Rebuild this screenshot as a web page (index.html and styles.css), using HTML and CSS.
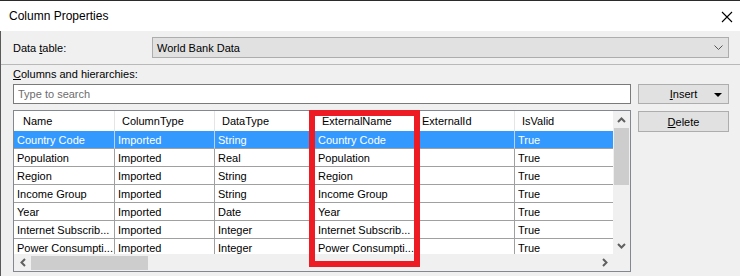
FILE: index.html
```html
<!doctype html>
<html lang="en">
<head>

<meta charset="utf-8">
<meta name="viewport" content="width=device-width, initial-scale=1">

<title>Column Properties</title>

<link rel="stylesheet" href="styles.css">

</head>
<body>

<div class="window">
	<div class="titlebar">
		<span class="title">Column Properties</span>
		<svg class="close" width="12" height="12" viewBox="0 0 12 12"><path d="M1 1 L11 11 M11 1 L1 11" stroke="#000" stroke-width="1.1" fill="none"/></svg>
	</div>

	<div class="content">
		<div class="field-row">
			<label for="data-table">Data <u>t</u>able:</label>
			<div class="combo" id="data-table">
				<span>World Bank Data</span>
				<svg width="9" height="5" viewBox="0 0 9 5"><polyline points="0.5,0.5 4.5,4.5 8.5,0.5" stroke="#555" stroke-width="1" fill="none"/></svg>
			</div>
		</div>

		<div class="sep"></div>

		<div class="section-label"><u>C</u>olumns and hierarchies:</div>

		<div class="columns-layout">
			<input type="text" class="search" placeholder="Type to search">
			<button type="button" class="btn btn--split"><span><u>I</u>nsert</span><span class="caret"></span></button>

			<div class="grid-box">
				<div class="grid-view">
					<table class="grid">
						<thead>
							<tr><th>Name</th><th>ColumnType</th><th>DataType</th><th>ExternalName</th><th>ExternalId</th><th>IsValid</th></tr>
						</thead>
						<tbody>
							<tr class="--selected"><td>Country Code</td><td>Imported</td><td>String</td><td>Country Code</td><td></td><td>True</td></tr>
							<tr><td>Population</td><td>Imported</td><td>Real</td><td>Population</td><td></td><td>True</td></tr>
							<tr><td>Region</td><td>Imported</td><td>String</td><td>Region</td><td></td><td>True</td></tr>
							<tr><td>Income Group</td><td>Imported</td><td>String</td><td>Income Group</td><td></td><td>True</td></tr>
							<tr><td>Year</td><td>Imported</td><td>Date</td><td>Year</td><td></td><td>True</td></tr>
							<tr><td>Internet Subscrib...</td><td>Imported</td><td>Integer</td><td>Internet Subscrib...</td><td></td><td>True</td></tr>
							<tr><td>Power Consumpti...</td><td>Imported</td><td>Integer</td><td>Power Consumpti...</td><td></td><td>True</td></tr>
						</tbody>
					</table>
				</div>

				<div class="vscroll">
					<div class="arrow"><svg width="9" height="6" viewBox="0 0 9 6"><polyline points="1,5 4.5,1.5 8,5" stroke="#606060" stroke-width="2" fill="none"/></svg></div>
					<div class="vscroll__thumb"></div>
					<div class="vscroll__track"></div>
					<div class="arrow"><svg width="9" height="6" viewBox="0 0 9 6"><polyline points="1,1 4.5,4.5 8,1" stroke="#606060" stroke-width="2" fill="none"/></svg></div>
				</div>

				<div class="hscroll">
					<div class="arrow"><svg width="6" height="9" viewBox="0 0 6 9"><polyline points="5,1 1.5,4.5 5,8" stroke="#606060" stroke-width="2" fill="none"/></svg></div>
					<div class="hscroll__thumb"></div>
					<div class="hscroll__track"></div>
					<div class="arrow"><svg width="6" height="9" viewBox="0 0 6 9"><polyline points="1,1 4.5,4.5 1,8" stroke="#606060" stroke-width="2" fill="none"/></svg></div>
				</div>

				<div class="corner"></div>

				<div class="highlight"></div>
			</div>

			<button type="button" class="btn btn--delete"><u>D</u>elete</button>
		</div>
	</div>
</div>

</body>
</html>
```

FILE: styles.css
```css
body {
	margin: 0;
	padding: 0;
	font-family: 'Liberation Sans', Arial, sans-serif;
	font-size: 11px;
	color: #000;
	background: #f0f0f0;
}

.window {
	width: 740px;
	height: 276px;
	overflow: hidden;
	border-top: 1px solid #2b2b2b;
	box-sizing: border-box;
}

.titlebar {
	display: flex;
	align-items: center;
	justify-content: space-between;
	height: 30px;
	padding: 0 7px 0 9px;
	background: #fff;
}
.title {
	font-size: 12px;
}
.close {
	display: block;
	margin-top: 1px;
}

.content {
	height: 245px;
	padding: 6px 11px 0 12px;
	border-left: 1px solid #5a5a5a;
	box-sizing: border-box;
}

.field-row {
	display: grid;
	grid-template-columns: 139px 1fr;
	align-items: center;
	height: 21px;
}

.combo {
	display: flex;
	align-items: center;
	justify-content: space-between;
	height: 21px;
	padding: 0 5px 0 4px;
	border: 1px solid #adadad;
	background: #e1e1e1;
	box-sizing: border-box;
}

.sep {
	height: 1px;
	margin: 6px -11px 0 -12px;
	background: #b9b9b9;
}

.section-label {
	height: 19px;
	line-height: 19px;
}

.columns-layout {
	display: grid;
	grid-template-columns: 618px 91px;
	grid-template-rows: 20px auto;
	column-gap: 7px;
	row-gap: 6px;
}

.search {
	width: 100%;
	height: 20px;
	margin: 0;
	padding: 0 4px;
	border: 1px solid #7a7a7a;
	background: #fff;
	font-family: inherit;
	font-size: 11px;
	box-sizing: border-box;
	outline: none;
}
.search::placeholder {
	color: #6d6d6d;
}

.btn {
	position: relative;
	height: 20px;
	margin: 0;
	padding: 0;
	border: 1px solid #adadad;
	background: #e1e1e1;
	font-family: inherit;
	font-size: 11px;
	color: #000;
	box-sizing: border-box;
}
.btn--delete {
	align-self: start;
	height: 21px;
	margin-top: 1px;
}
.caret {
	position: absolute;
	top: 8px;
	right: 6px;
	width: 0;
	height: 0;
	border-left: 4px solid transparent;
	border-right: 4px solid transparent;
	border-top: 4px solid #000;
}

.grid-box {
	position: relative;
	display: grid;
	grid-template-columns: 599px 17px;
	grid-template-rows: 143px 17px;
	height: 162px;
	border: 1px solid #828790;
	background: #f0f0f0;
	box-sizing: border-box;
}

.grid-view {
	overflow: hidden;
	background: #f0f0f0;
}

.grid {
	width: 601px;
	table-layout: fixed;
	border-collapse: separate;
	border-spacing: 0;
}
.grid th,
.grid td {
	width: 100px;
	overflow: hidden;
	white-space: nowrap;
	text-align: left;
	box-sizing: border-box;
}
.grid th:first-child,
.grid td:first-child {
	width: 101px;
}
.grid th {
	height: 20px;
	padding: 0 0 0 7px;
	font-weight: 400;
	background: #fff;
	border-right: 1px solid #e5e5e5;
}
.grid th:first-child {
	padding-left: 9px;
}
.grid td {
	height: 18px;
	padding: 0 0 0 3px;
	background: #fff;
	border-right: 1px solid #a0a0a0;
	border-bottom: 1px solid #a0a0a0;
}
.grid .--selected td {
	background: #3399ff;
	color: #fff;
	border-right-color: #b9d4ef;
}

.vscroll {
	display: flex;
	flex-direction: column;
	background: #f0f0f0;
}
.vscroll .arrow {
	display: flex;
	align-items: center;
	justify-content: center;
	height: 17px;
	flex: none;
}
.vscroll__thumb {
	height: 57px;
	margin: 0 1px;
	background: #cdcdcd;
}
.vscroll__track {
	flex: 1;
}

.hscroll {
	display: flex;
	background: #f0f0f0;
}
.hscroll .arrow {
	display: flex;
	align-items: center;
	justify-content: center;
	width: 17px;
	flex: none;
}
.hscroll__thumb {
	width: 117px;
	margin: 2px 0 1px;
	background: #cdcdcd;
}
.hscroll__track {
	flex: 1;
}

.corner {
	background: #f0f0f0;
}

.highlight {
	position: absolute;
	left: 295px;
	top: -1px;
	width: 111px;
	height: 157px;
	border: 6px solid #ed1c24;
	box-sizing: border-box;
	pointer-events: none;
}
```
